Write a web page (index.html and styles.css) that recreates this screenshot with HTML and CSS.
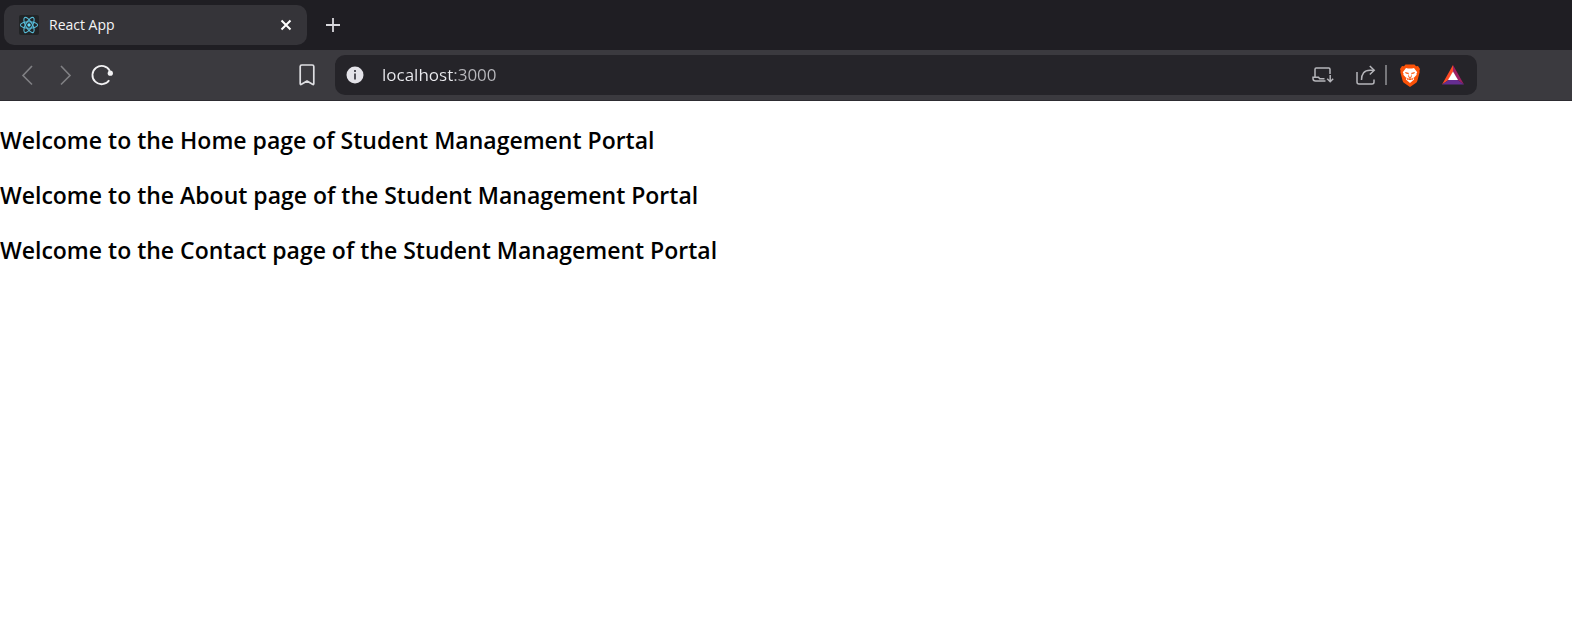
FILE: index.html
```html
<!DOCTYPE html>
<html lang="en">
<head>
<meta charset="utf-8">
<meta name="viewport" content="width=device-width, initial-scale=1">
<title>React App</title>
<link rel="stylesheet" href="styles.css">
</head>
<body>
<header class="browser">
  <div class="tab-strip">
    <div class="tab">
      <svg class="favicon" width="20" height="20" viewBox="0 0 20 20" aria-hidden="true">
        <rect width="20" height="20" rx="2" fill="#222426"/>
        <g fill="none" stroke="#58bdd9" stroke-width="1.1">
          <ellipse cx="10" cy="10" rx="8.6" ry="3.3"/>
          <ellipse cx="10" cy="10" rx="8.6" ry="3.3" transform="rotate(60 10 10)"/>
          <ellipse cx="10" cy="10" rx="8.6" ry="3.3" transform="rotate(120 10 10)"/>
        </g>
        <circle cx="10" cy="10" r="1.7" fill="#61dafb"/>
      </svg>
      <span class="tab-title">React App</span>
      <button class="icon-button" type="button" aria-label="Close tab">
        <svg width="12" height="12" viewBox="0 0 12 12"><path d="M1.5 1.5l9 9M10.5 1.5l-9 9" fill="none" stroke="#fff" stroke-width="2"/></svg>
      </button>
    </div>
    <button class="icon-button" type="button" aria-label="New tab">
      <svg width="14" height="14" viewBox="0 0 14 14"><path d="M7 0v14M0 7h14" fill="none" stroke="#d8d8dc" stroke-width="1.8"/></svg>
    </button>
  </div>
  <div class="toolbar">
    <nav class="history" aria-label="History">
      <button class="icon-button" type="button" aria-label="Back">
        <svg width="22" height="22" viewBox="0 0 22 22"><path d="M15 2L6 11.500l9 9" fill="none" stroke="#808084" stroke-width="1.6"/></svg>
      </button>
      <button class="icon-button" type="button" aria-label="Forward">
        <svg width="22" height="22" viewBox="0 0 22 22"><path d="M7 2l9 9.500-9 9" fill="none" stroke="#808084" stroke-width="1.6"/></svg>
      </button>
      <button class="icon-button" type="button" aria-label="Reload">
        <svg width="22" height="22" viewBox="0 0 22 22"><path d="M18.200 16.300A9.200 9.200 0 1 1 18.800 6.800" fill="none" stroke="#f1f1f3" stroke-width="1.800"/><circle cx="19.300" cy="9.200" r="2.600" fill="#f1f1f3"/></svg>
      </button>
    </nav>
    <button class="icon-button" type="button" aria-label="Bookmark">
      <svg width="16" height="22" viewBox="0 0 16 22"><path d="M2.800 1h10.400a1.600 1.600 0 0 1 1.600 1.600v17q0 1.600-1.300.7L8 17l-5.500 3.300q-1.300.9-1.300-.7v-17A1.600 1.600 0 0 1 2.800 1z" fill="none" stroke="#dedee2" stroke-width="1.700" stroke-linejoin="round"/></svg>
    </button>
    <div class="address-bar">
      <button class="icon-button" type="button" aria-label="Site information">
        <svg width="18" height="18" viewBox="0 0 18 18"><circle cx="9" cy="9" r="8.500" fill="#e4e3e9"/><path d="M9 4v2M9 7.500v6" stroke="#515058" stroke-width="2"/></svg>
      </button>
      <input class="address" type="text" aria-label="Address" value="localhost:3000">
      <div class="actions">
        <button class="icon-button" type="button" aria-label="Install app">
          <svg width="22" height="18" viewBox="0 0 22 18"><g fill="none" stroke="#b5b5ba" stroke-width="1.500"><path d="M3 11V3.200Q3 2 4.200 2h12.600Q18 2 18 3.200V8"/><path d="M13.500 15H3.500Q1 15 1 12.500V11.300h5.500l1.200 1.500h4.800"/><path d="M18.200 9v6.500M15.200 12.800l3 3 3-3"/></g></svg>
        </button>
        <button class="icon-button" type="button" aria-label="Share">
          <svg width="20" height="20" viewBox="0 0 20 20"><g fill="none" stroke="#b5b5ba" stroke-width="1.500"><path d="M1 7v10q0 2 2 2h13q2 0 2-2v-2.500"/><path d="M5.500 15q0-9.800 8.500-9.800h4"/><path d="M13.800 1l4.400 4.200-4.400 4.300"/></g></svg>
        </button>
        <span class="divider"></span>
        <button class="icon-button" type="button" aria-label="Brave Shields">
          <svg width="20" height="23" viewBox="0 0 20 23"><path d="M5.500.5h9L16 2.200l2-.2 2 3-.6 2 .3 1-2.400 9q-.4 1.300-1.500 2.100L10 23l-5.800-3.900q-1.100-.8-1.500-2.100L.3 8l.3-1L0 5l2-3 2 .2z" fill="#fb5208"/><path d="M6 4l2 .5h4L14 4l3.200 4.300-.8 1.500.3 1-3 3.200.4 1.600L10 19l-4.100-3.400.4-1.600-3-3.200.3-1-.8-1.500z" fill="#fff"/><path d="M5 8l4 1-.8 1-2.400-.4zM15 8l-4 1 .8 1 2.400-.4zM8.700 9.500l.5 3L10 13.500l.8-1 .5-3 .4 3.500-1.700 1.400L8.300 13zM6.500 13.200l1.500 1.600 2-1 2 1 1.500-1.600-.7 2.600-1.300-.3-1.500.8-1.500-.8-1.300.3z" fill="#fb5208"/></svg>
        </button>
        <button class="icon-button" type="button" aria-label="Brave Rewards">
          <svg width="22" height="20" viewBox="0 0 22 20"><path d="M11 0v7l-4.500 8L0 19.500z" fill="#ff4b25"/><path d="M11 0l11 19.500L15.500 15 11 7z" fill="#9e1f63"/><path d="M0 19.500L6.500 15h9l6.500 4.500z" fill="#662d91"/><path d="M11 6.500l5 8.500H6z" fill="#fff"/></svg>
        </button>
      </div>
    </div>
  </div>
</header>
<main class="page">
  <h3 class="welcome">Welcome to the Home page of Student Management Portal</h3>
  <h3 class="welcome">Welcome to the About page of the Student Management Portal</h3>
  <h3 class="welcome">Welcome to the Contact page of the Student Management Portal</h3>
</main>
</body>
</html>
```
FILE: styles.css
```css
* {
  box-sizing: border-box;
}

body {
  margin: 0;
  background: #fff;
  color: #000;
  font-family: "Segoe UI", "Open Sans", "Noto Sans", sans-serif;
}

.browser svg {
  display: block;
}

.icon-button {
  flex: none;
  padding: 0;
  border: 0;
  background: none;
}

.tab-strip {
  display: flex;
  align-items: center;
  gap: 19px;
  height: 50px;
  padding: 0 4px;
  background: #1f1e23;
}

.tab {
  display: flex;
  align-items: center;
  gap: 10px;
  flex: 0 1 303px;
  height: 40px;
  padding: 0 15px;
  border-radius: 10px;
  background: #353439;
}

.favicon {
  flex: none;
}

.tab-title {
  flex: 1;
  color: #f4f4f6;
  font-size: 14px;
  line-height: 20px;
}

.toolbar {
  display: flex;
  align-items: center;
  height: 51px;
  padding: 0 95px 0 17px;
  border-bottom: 1px solid #2d2c31;
  background: #3b3a3f;
}

.history {
  display: flex;
  gap: 15px;
  margin-right: 186px;
}

.address-bar {
  display: flex;
  flex: 1;
  align-items: center;
  height: 40px;
  margin-left: 20px;
  padding: 0 13px 0 11px;
  border-radius: 10px;
  background: #252429;
}

.address {
  flex: 1;
  min-width: 0;
  margin-left: 18px;
  padding: 0;
  border: 0;
  outline: 0;
  background: linear-gradient(to right, #ececf0 72px, #b9b9be 72px);
  background-clip: text;
  color: transparent;
  font-family: inherit;
  font-size: 17px;
  line-height: 24px;
}

.actions {
  display: flex;
  align-items: center;
  gap: 22px;
}

.divider {
  width: 2px;
  height: 20px;
  margin: 0 -9px 0 -13px;
  background: #77777b;
}

.page {
  padding: 23px 0;
}

.welcome {
  margin: 0 0 22px;
  font-size: 23px;
  font-weight: 600;
  line-height: 33px;
}
```
